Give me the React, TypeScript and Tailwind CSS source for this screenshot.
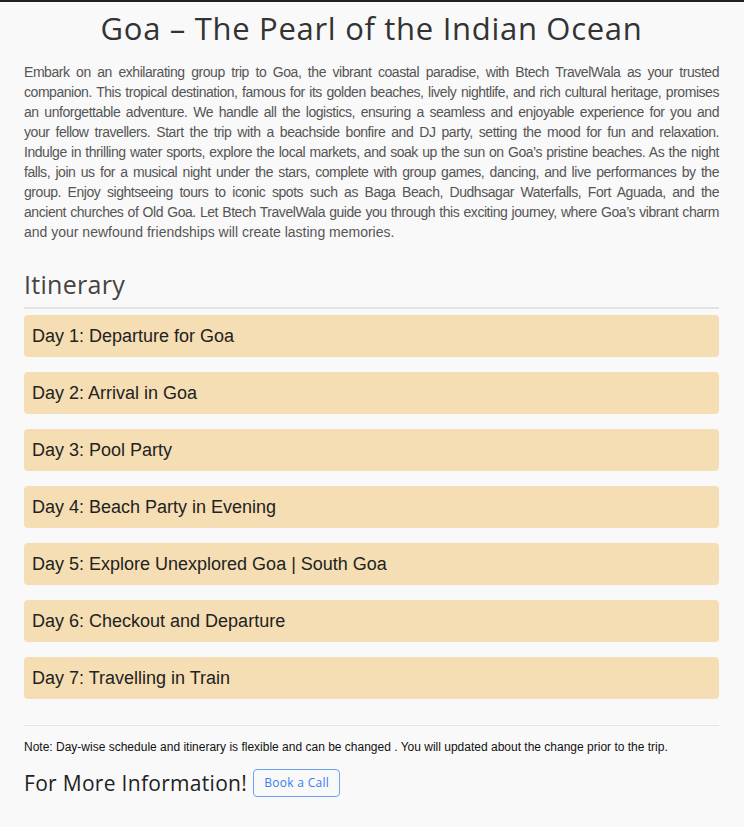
const days = [
  "Day 1: Departure for Goa",
  "Day 2: Arrival in Goa",
  "Day 3: Pool Party",
  "Day 4: Beach Party in Evening",
  "Day 5: Explore Unexplored Goa | South Goa",
  "Day 6: Checkout and Departure",
  "Day 7: Travelling in Train",
];

// line breaks as they fall in the design
const intro = [
  "Embark on an exhilarating group trip to Goa, the vibrant coastal paradise, with Btech TravelWala as your trusted",
  "companion. This tropical destination, famous for its golden beaches, lively nightlife, and rich cultural heritage, promises",
  "an unforgettable adventure. We handle all the logistics, ensuring a seamless and enjoyable experience for you and",
  "your fellow travellers. Start the trip with a beachside bonfire and DJ party, setting the mood for fun and relaxation.",
  "Indulge in thrilling water sports, explore the local markets, and soak up the sun on Goa’s pristine beaches. As the night",
  "falls, join us for a musical night under the stars, complete with group games, dancing, and live performances by the",
  "group. Enjoy sightseeing tours to iconic spots such as Baga Beach, Dudhsagar Waterfalls, Fort Aguada, and the",
  "ancient churches of Old Goa. Let Btech TravelWala guide you through this exciting journey, where Goa’s vibrant charm",
  "and your newfound friendships will create lasting memories.",
];

const heading = { fontFamily: "'Open Sans', 'DejaVu Sans', sans-serif" };

export default function App() {
  return (
    <div className="min-h-[827px] w-full border-t-2 border-[#222] bg-[#f9f9f9] font-['Liberation_Sans',Arial,sans-serif]">
      <div className="pl-6 pr-[25px] pt-[6px] pb-6">
        <h1
          className="text-center text-[31px] leading-[40px] text-[#333] tracking-[0.7px]"
          style={heading}
        >
          Goa – The Pearl of the Indian Ocean
        </h1>

        <p className="mt-[14px] text-[14px] leading-[20px] text-[#555]">
          {intro.map((line, i) => (
            <span
              key={i}
              className={
                i < intro.length - 1
                  ? "block whitespace-nowrap text-justify tracking-[-0.45px] [text-align-last:justify]"
                  : "block whitespace-nowrap"
              }
            >
              {line}
            </span>
          ))}
        </p>

        <h2
          className="mt-[25px] border-b-2 border-[#e3e3e3] pb-[6px] text-[25px] leading-[34px] text-[#444] tracking-[0.3px]"
          style={heading}
        >
          Itinerary
        </h2>

        <div className="mt-[6px] flex flex-col gap-[15px]">
          {days.map((d) => (
            <div
              key={d}
              className="flex h-[42px] items-center rounded-[4px] bg-[#f5deb3] px-2 text-[18px] text-[#222]"
            >
              {d}
            </div>
          ))}
        </div>

        <div className="mt-[26px] border-t border-[#e3e3e3] pt-[13px] text-[12px] leading-[16px] text-[#111]">
          Note: Day-wise schedule and itinerary is flexible and can be changed . You will updated
          about the change prior to the trip.
        </div>

        <div className="mt-[14px] flex items-center gap-[6px]">
          <span className="text-[21px] leading-[28px] text-[#222] tracking-[0.3px]" style={heading}>
            For More Information!
          </span>
          <button
            className="h-[28px] rounded-[4px] border border-[#6ea0f5] px-[10px] text-[12px] text-[#3b7bf0] tracking-[0.3px]"
            style={heading}
          >
            Book a Call
          </button>
        </div>
      </div>
    </div>
  );
}
